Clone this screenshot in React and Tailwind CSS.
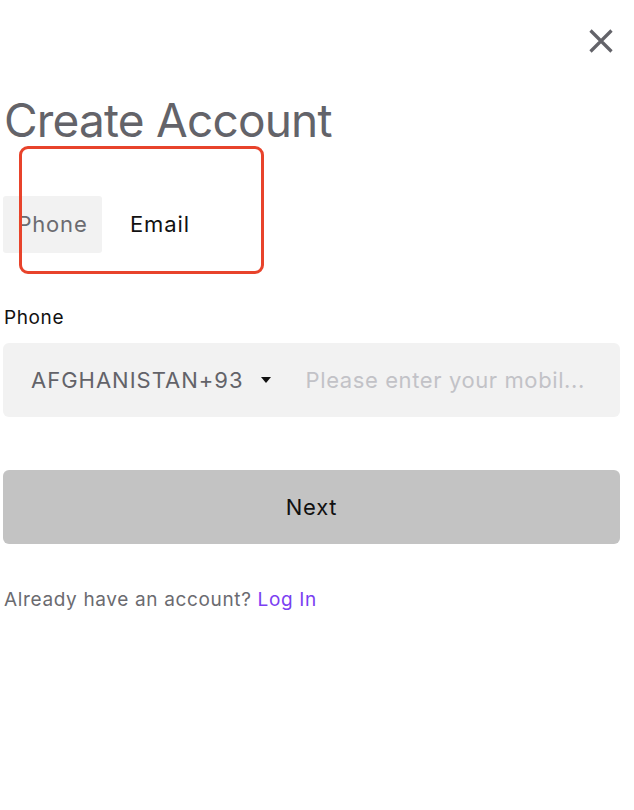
export default function App() {
  return (
    <div className="relative w-[634px] h-[810px] bg-white font-['Inter',sans-serif]">
      <div className="flex justify-end pt-[28px] pr-[20px]">
        <button className="w-[26px] h-[26px] flex items-center justify-center">
          <svg width="26" height="26" viewBox="0 0 26 26">
            <path d="M2.5 2.5 L23.5 23.5 M23.5 2.5 L2.5 23.5" stroke="#636369" strokeWidth="3.2" strokeLinecap="butt" />
          </svg>
        </button>
      </div>

      <div className="px-[3px]">
        <h1 className="mt-[39px] ml-[1px] text-[46px] leading-[54px] text-[#636369] tracking-[-0.8px]">Create Account</h1>

        <div className="mt-[49px] flex items-center">
          <div className="w-[99px] h-[57px] bg-[#f2f2f2] rounded-[3px] flex items-center justify-center text-[22px] tracking-[0.8px] text-[#6b6b70]">Phone</div>
          <div className="ml-[28px] text-[22px] tracking-[0.9px] text-[#111]">Email</div>
        </div>

        <div className="mt-[53px] ml-[1px] text-[19px] leading-[24px] tracking-[0.6px] text-[#111]">Phone</div>

        <div className="mt-[13px] h-[74px] w-[617px] bg-[#f2f2f2] rounded-[6px] flex items-center pl-[28px]">
          <span className="text-[22px] tracking-[1px] text-[#636369]">AFGHANISTAN+93</span>
          <span className="ml-[17px] w-0 h-0 border-l-[5px] border-r-[5px] border-t-[6px] border-l-transparent border-r-transparent border-t-[#111]"></span>
          <span className="ml-[35px] text-[22px] tracking-[0.6px] text-[#c2c2c7]">Please enter your mobil...</span>
        </div>

        <button className="mt-[53px] h-[74px] w-[617px] bg-[#c3c3c3] rounded-[6px] text-[22px] tracking-[0.8px] text-[#111] flex items-center justify-center">Next</button>

        <p className="mt-[44px] ml-[1px] text-[19px] leading-[24px] tracking-[0.65px] text-[#6b6b70]">
          Already have an account? <span className="text-[#7b3ff2]">Log In</span>
        </p>
      </div>

      <div className="absolute left-[19px] top-[146px] w-[245px] h-[128px] border-[3px] border-[#e8432b] rounded-[9px]"></div>
    </div>
  )
}
